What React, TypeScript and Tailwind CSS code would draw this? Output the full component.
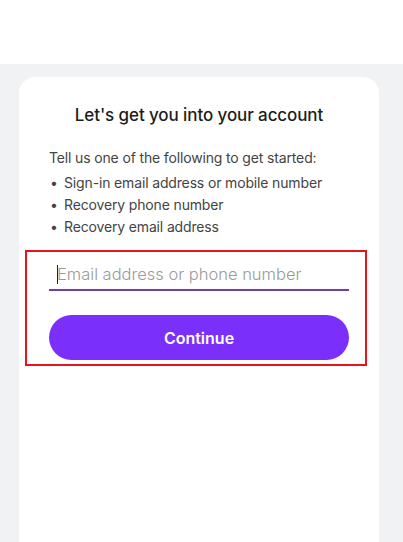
import React from 'react';

const items = [
  'Sign-in email address or mobile number',
  'Recovery phone number',
  'Recovery email address',
];

const App = () => {
  return (
    <div className="min-h-screen bg-white font-['Inter',sans-serif]">
      {/* Top bar */}
      <div className="h-16 bg-white" />

      {/* Page body */}
      <div className="bg-[#f1f2f4] pt-[13px] pl-[19px] min-h-[478px]">
        <div className="w-[360px] min-h-[470px] rounded-t-[16px] bg-white pt-[26px]">
          <h1 className="text-center text-[17px] leading-6 font-medium tracking-[-0.1px] text-[#1d1d1b]">
            Let's get you into your account
          </h1>

          <div className="mt-[20px] px-[30px] text-[14px] leading-[22px] tracking-[-0.15px] text-[#444]">
            <p>Tell us one of the following to get started:</p>
            <ul className="mt-[3px]">
              {items.map((item) => (
                <li key={item} className="flex">
                  <span className="w-[15px] pl-[1px]">•</span>
                  <span>{item}</span>
                </li>
              ))}
            </ul>
          </div>

          {/* Highlighted form */}
          <div className="mt-[12px] ml-[6px] w-[342px] border-2 border-[#e8141b] pl-[22px] pr-[16px] pt-[6px] pb-[4px]">
            <div className="relative">
              <input
                className="h-[33px] w-[300px] border-b-2 border-[#6d3fa8] px-2 text-[16.5px] font-light text-[#333] placeholder-[#9a9a9a] outline-none"
                placeholder="Email address or phone number"
              />
              <span className="absolute left-[8px] top-[7px] h-[19px] w-px bg-[#222]" />
            </div>
            <button className="mt-[24px] h-[45px] w-[300px] rounded-full bg-[#7a30fa] text-[16px] font-semibold text-white">
              Continue
            </button>
          </div>
        </div>
      </div>
    </div>
  );
};

export default App;
